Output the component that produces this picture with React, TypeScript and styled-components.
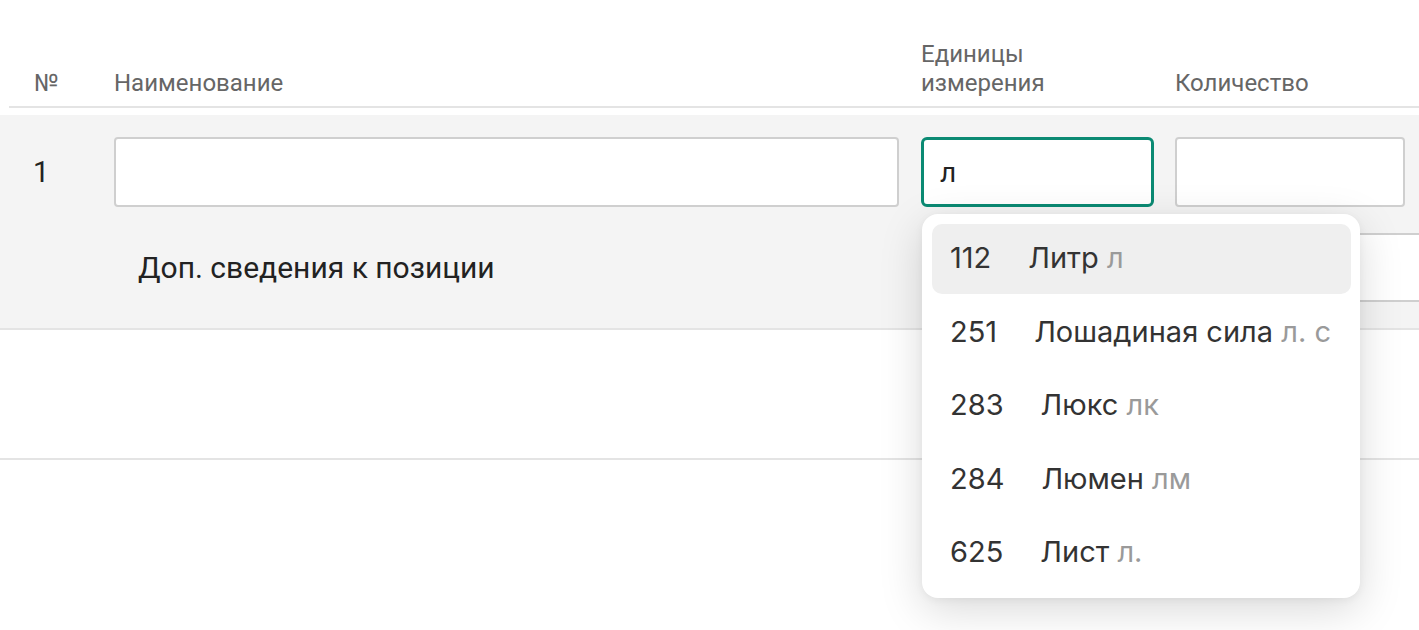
import React from 'react';
import styled, { createGlobalStyle } from 'styled-components';

const GlobalStyle = createGlobalStyle`
    html, body {
        margin: 0;
        padding: 0;
        background: #fff;
        overflow: hidden;
    }
    body {
        font-family: Roboto, "Liberation Sans", Arial, sans-serif;
        color: #222;
    }
`;

const Page = styled.div`
    width: 1419px;
    height: 630px;
    padding-top: 40px;
    box-sizing: border-box;
    overflow: hidden;
`;

const HeadRow = styled.div`
    margin-left: 9px;
    display: grid;
    grid-template-columns: 105px 807px 254px 1fr;
    align-items: end;
    padding-bottom: 8px;
    border-bottom: 2px solid #e4e4e4;
`;

interface HeadCellProps {
    first?: boolean;
}

const HeadCell = styled.div<HeadCellProps>`
    font-size: 24px;
    line-height: 29px;
    color: #666;
    padding-left: ${props => props.first ? '25px' : '0'};
`;

const PositionBlock = styled.div`
    margin-top: 7px;
    background: #f4f4f4;
    border-bottom: 2px solid #e4e4e4;
    padding: 22px 0 26px;
    display: flex;
    flex-direction: column;
    gap: 26px;
`;

const FieldRow = styled.div`
    display: grid;
    grid-template-columns: 114px 807px 254px 1fr;
    align-items: center;
`;

const RowNumber = styled.div`
    font-size: 29px;
    padding-left: 33px;
    color: #222;
`;

interface FieldProps {
    w: number;
    focused?: boolean;
}

const Field = styled.div<FieldProps>`
    position: relative;
    width: ${props => props.w}px;
    height: 70px;
    box-sizing: border-box;
    background: #fff;
    border: ${props => props.focused ? '3px solid #0b8a73' : '2px solid #cfcfcf'};
    border-radius: ${props => props.focused ? '6px' : '4px'};
    display: flex;
    align-items: center;
    padding-left: ${props => props.focused ? '16px' : '18px'};
    font-size: 28px;
    color: #222;
`;

const ExtraLabel = styled.div`
    grid-column: 1 / 3;
    padding-left: 138px;
    font-size: 30px;
    color: #222;
`;

const ExtraField = styled.div`
    grid-column: 3 / 5;
    margin-left: 6px;
    height: 69px;
    width: 520px;
    box-sizing: border-box;
    background: #fff;
    border: 2px solid #cfcfcf;
    border-radius: 4px;
`;

const EmptyRow = styled.div`
    height: 128px;
    border-bottom: 2px solid #e4e4e4;
`;

const Menu = styled.div`
    position: absolute;
    left: -2px;
    top: 74px;
    width: 438px;
    box-sizing: border-box;
    padding: 10px 9px 10px 10px;
    background: #fff;
    border-radius: 16px;
    box-shadow: 0 12px 44px rgba(0, 0, 0, 0.15), 0 2px 8px rgba(0, 0, 0, 0.05);
    z-index: 10;
    font-family: Inter, "Noto Sans", sans-serif;
`;

interface OptionProps {
    active?: boolean;
}

const Option = styled.div<OptionProps>`
    height: 70px;
    margin-bottom: 3.5px;
    border-radius: 10px;
    background: ${props => props.active ? '#efefef' : 'transparent'};
    display: flex;
    align-items: center;
    gap: 37px;
    padding-left: 18px;
    padding-bottom: 3px;
    box-sizing: border-box;
    font-size: 29px;
    color: #333;
    white-space: nowrap;

    &:last-child {
        margin-bottom: 0;
    }
`;

const Abbr = styled.span`
    color: #9a9a9a;
`;

const units = [
    { code: '112', name: 'Литр', abbr: 'л' },
    { code: '251', name: 'Лошадиная сила', abbr: 'л. с' },
    { code: '283', name: 'Люкс', abbr: 'лк' },
    { code: '284', name: 'Люмен', abbr: 'лм' },
    { code: '625', name: 'Лист', abbr: 'л.' },
];

export default function App() {
    return (
        <Page>
            <GlobalStyle />
            <HeadRow>
                <HeadCell first>№</HeadCell>
                <HeadCell>Наименование</HeadCell>
                <HeadCell>Единицы<br />измерения</HeadCell>
                <HeadCell>Количество</HeadCell>
            </HeadRow>
            <PositionBlock>
                <FieldRow>
                    <RowNumber>1</RowNumber>
                    <Field w={785} />
                    <Field w={233} focused>
                        л
                        <Menu>
                            {units.map((u, i) => (
                                <Option key={u.code} active={i === 0}>
                                    <span>{u.code}</span>
                                    <span>{u.name} <Abbr>{u.abbr}</Abbr></span>
                                </Option>
                            ))}
                        </Menu>
                    </Field>
                    <Field w={230} />
                </FieldRow>
                <FieldRow>
                    <ExtraLabel>Доп. сведения к позиции</ExtraLabel>
                    <ExtraField />
                </FieldRow>
            </PositionBlock>
            <EmptyRow />
        </Page>
    );
}
